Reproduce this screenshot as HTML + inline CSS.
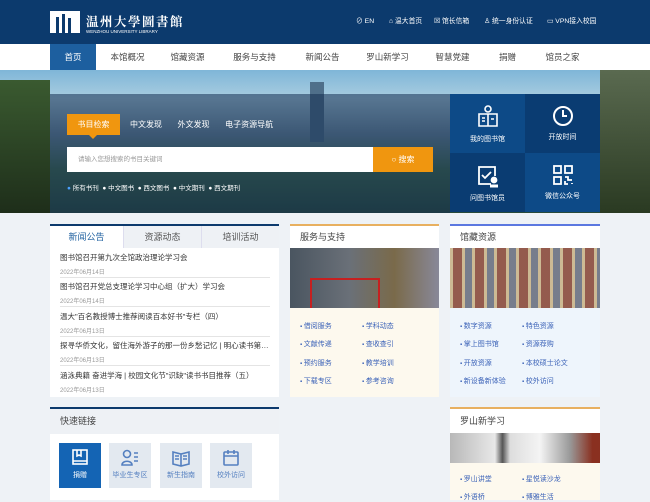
<!DOCTYPE html>
<html><head><meta charset="utf-8"><style>
*{margin:0;padding:0;box-sizing:border-box}
body{width:650px;height:500px;overflow:hidden;background:#eef2f6;font-family:"Liberation Sans","Noto Sans CJK SC",sans-serif;font-size:8px;color:#333;position:relative}
.a{position:absolute}
#hd{left:0;top:0;width:650px;height:44px;background:#0c3a6d}
#nav{left:0;top:44px;width:650px;height:26px;background:#fff}
#nav span{position:absolute;top:0;height:26px;line-height:26px;font-size:8.5px;color:#444;text-align:center}
#ban{left:0;top:70px;width:650px;height:143px;background:linear-gradient(180deg,#7fb6d8 0%,#a9cde0 20%,#6c8aa0 45%,#3f6a4a 70%,#284a3a 100%)}
.tile{position:absolute;width:75px;height:59px;color:#fff;text-align:center;font-size:7px}
.tile svg{display:block;margin:11px auto 5px}
.box{position:absolute;background:#fff}
.hdr{height:22px;line-height:22px;font-size:9px;color:#444;padding-left:10px;background:#fff}
.lk{position:absolute;font-size:7px;color:#3c63b8}
.lk:before{content:"▪ ";font-size:6px}
.ni{position:absolute;left:10px;width:210px;border-bottom:1px solid #e4e4e4;height:29px}
.ni b{display:block;font-weight:normal;font-size:7.5px;color:#333;margin-top:3px;white-space:nowrap;overflow:hidden}
.ni i{display:block;font-style:normal;font-size:6px;color:#999;margin-top:4px}
.q{position:absolute;top:443px;width:42px;height:45px;background:#e3e9f0;color:#5580c0;font-size:7px;text-align:center}
.q svg{display:block;margin:6px auto 3px}
.hl{position:absolute;top:15px;color:#fff;font-size:6.8px;white-space:nowrap}
</style></head><body>
<div id="hd" class="a">
 <div class="a" style="left:50px;top:11px;width:30px;height:22px;background:#fff"></div>
 <div class="a" style="left:56px;top:17px;width:3px;height:16px;background:#0c3a6d"></div>
 <div class="a" style="left:62px;top:14px;width:3px;height:19px;background:#0c3a6d"></div>
 <div class="a" style="left:68px;top:18px;width:3px;height:15px;background:#0c3a6d"></div>
 <div class="a" style="left:86px;top:12px;color:#fff;font-size:12.5px;font-family:'Noto Serif CJK SC',serif;font-weight:bold;letter-spacing:1.5px">温州大學圖書館</div>
 <div class="a" style="left:86px;top:29px;color:#fff;font-size:4.5px">WENZHOU UNIVERSITY LIBRARY</div>
 <div class="hl" style="left:356px">⊘ EN</div>
 <div class="hl" style="left:389px">⌂ 温大首页</div>
 <div class="hl" style="left:434px">☒ 馆长信箱</div>
 <div class="hl" style="left:484px">♙ 统一身份认证</div>
 <div class="hl" style="left:547px">▭ VPN接入校园</div>
</div>
<div id="nav" class="a">
 <span style="left:50px;width:46px;background:#1d5f9f;color:#fff">首页</span>
 <span style="left:100px;width:55px">本馆概况</span>
 <span style="left:160px;width:55px">馆藏资源</span>
 <span style="left:227px;width:55px">服务与支持</span>
 <span style="left:295px;width:55px">新闻公告</span>
 <span style="left:360px;width:55px">罗山新学习</span>
 <span style="left:425px;width:55px">智慧党建</span>
 <span style="left:485px;width:45px">捐赠</span>
 <span style="left:535px;width:55px">馆员之家</span>
</div>
<div id="ban" class="a">
 <div class="a" style="left:0;top:10px;width:50px;height:133px;background:linear-gradient(180deg,#3a5a30,#1e2e1a)"></div>
 <div class="a" style="left:600px;top:0;width:50px;height:143px;background:linear-gradient(180deg,#5a6a50,#2a3a22)"></div>
 <div class="a" style="left:310px;top:12px;width:14px;height:60px;background:#4f6f8a"></div>
</div>
<div class="a" style="left:50px;top:94px;width:400px;height:119px;background:rgba(20,45,80,.55)"></div>
<div class="a" style="left:67px;top:114px;width:53px;height:21px;background:#f0960f;color:#fff;font-size:8px;line-height:21px;text-align:center">书目检索</div>
<div class="a" style="left:89px;top:135px;border:4px solid transparent;border-top-color:#f0960f"></div>
<div class="a" style="left:130px;top:119px;color:#fff;font-size:8px;white-space:nowrap">中文发现 &nbsp;&nbsp;&nbsp;&nbsp;&nbsp; 外文发现 &nbsp;&nbsp;&nbsp;&nbsp;&nbsp; 电子资源导航</div>
<div class="a" style="left:67px;top:147px;width:306px;height:25px;background:#fff;color:#999;font-size:6.5px;line-height:25px;padding-left:11px">请输入您想搜索的书目关键词</div>
<div class="a" style="left:373px;top:147px;width:60px;height:25px;background:#f0960f;color:#fff;font-size:8px;line-height:25px;text-align:center">○ 搜索</div>
<div class="a" style="left:67px;top:182px;color:#fff;font-size:6.5px;white-space:nowrap"><span style="color:#4aa0ff">●</span> 所有书刊 &nbsp;● 中文图书 &nbsp;● 西文图书 &nbsp;● 中文期刊 &nbsp;● 西文期刊</div>
<div class="tile" style="left:450px;top:94px;background:#0d4a87"><svg width="22" height="24" viewBox="0 0 22 24" fill="none" stroke="#fff" stroke-width="1.6"><circle cx="11" cy="4" r="3"/><path d="M2 9h9v12H2zM11 9h9v12h-9zM5 13h3M5 16h3M14 14h3"/></svg>我的图书馆</div>
<div class="tile" style="left:525px;top:94px;background:#0a3c72"><svg width="22" height="22" viewBox="0 0 22 22" fill="none" stroke="#fff" stroke-width="2"><circle cx="11" cy="11" r="9"/><path d="M11 5v6h4"/></svg>开放时间</div>
<div class="tile" style="left:450px;top:153px;background:#0a3c72"><svg width="22" height="24" viewBox="0 0 22 24" fill="none" stroke="#fff" stroke-width="1.8"><path d="M14 20H2V3h16v9"/><path d="M5 11l3 3 6-6"/><circle cx="17" cy="16" r="2.5" fill="#fff"/><path d="M13 22h8" stroke-width="3"/></svg>问图书馆员</div>
<div class="tile" style="left:525px;top:153px;background:#0d4a87"><svg width="22" height="22" viewBox="0 0 22 22" fill="none" stroke="#fff" stroke-width="1.8"><rect x="2" y="2" width="7" height="7"/><rect x="13" y="2" width="7" height="7"/><rect x="2" y="13" width="7" height="7"/><path d="M13 13h3v3h4M13 17v3h3M20 19v1"/></svg>微信公众号</div>

<div class="box" style="left:50px;top:224px;width:229px;height:173px;border-top:2px solid #0c3a6d">
 <div class="a" style="left:0;top:0;width:229px;height:22px;background:#eef1f5"></div>
 <div class="a" style="left:0;top:0;width:73px;height:22px;background:#fff;color:#1d5f9f;font-size:9px;line-height:22px;text-align:center">新闻公告</div>
 <div class="a" style="left:73px;top:0;width:78px;height:22px;color:#555;font-size:9px;line-height:22px;text-align:center;border-left:1px solid #dde">资源动态</div>
 <div class="a" style="left:151px;top:0;width:78px;height:22px;color:#555;font-size:9px;line-height:22px;text-align:center;border-left:1px solid #dde">培训活动</div>
 <div class="ni" style="top:23px"><b>图书馆召开第九次全馆政治理论学习会</b><i>2022年06月14日</i></div>
 <div class="ni" style="top:52px"><b>图书馆召开党总支理论学习中心组（扩大）学习会</b><i>2022年06月14日</i></div>
 <div class="ni" style="top:82px"><b>温大"百名教授博士推荐阅读百本好书"专栏（四）</b><i>2022年06月13日</i></div>
 <div class="ni" style="top:111px"><b>探寻华侨文化，留住海外游子的那一份乡愁记忆 | 明心读书第…</b><i>2022年06月13日</i></div>
 <div class="ni" style="top:141px;border:none"><b>涵泳典籍 奋进学海 | 校园文化节"识缺"读书书目推荐（五）</b><i>2022年06月13日</i></div>
</div>
<div class="box" style="left:290px;top:224px;width:149px;height:173px;border-top:2px solid #e8b060;background:#fdf9ee">
 <div class="hdr">服务与支持</div>
 <div class="a" style="left:0;top:22px;width:149px;height:60px;background:linear-gradient(90deg,#4a5560,#6a7078 40%,#7a6a4a 70%,#889)"></div>
 <div class="a" style="left:20px;top:52px;width:70px;height:30px;border:2px solid #c62020;border-bottom:none"></div>
 <div class="lk" style="left:10px;top:95px">借阅服务</div><div class="lk" style="left:72px;top:95px">学科动态</div>
 <div class="lk" style="left:10px;top:113px">文献传递</div><div class="lk" style="left:72px;top:113px">查收查引</div>
 <div class="lk" style="left:10px;top:132px">预约服务</div><div class="lk" style="left:72px;top:132px">教学培训</div>
 <div class="lk" style="left:10px;top:150px">下载专区</div><div class="lk" style="left:72px;top:150px">参考咨询</div>
</div>
<div class="box" style="left:450px;top:224px;width:150px;height:173px;border-top:2px solid #5b78e0;background:#eef5fc">
 <div class="hdr">馆藏资源</div>
 <div class="a" style="left:0;top:22px;width:150px;height:60px;background:repeating-linear-gradient(90deg,#c9b488 0 3px,#8a4a3a 3px 12px,#c9b488 12px 15px,#6a7080 15px 22px);opacity:.9"></div>
 <div class="lk" style="left:10px;top:95px">数字资源</div><div class="lk" style="left:72px;top:95px">特色资源</div>
 <div class="lk" style="left:10px;top:113px">掌上图书馆</div><div class="lk" style="left:72px;top:113px">资源荐购</div>
 <div class="lk" style="left:10px;top:132px">开放资源</div><div class="lk" style="left:72px;top:132px">本校硕士论文</div>
 <div class="lk" style="left:10px;top:150px">新设备新体验</div><div class="lk" style="left:72px;top:150px">校外访问</div>
</div>
<div class="box" style="left:50px;top:407px;width:229px;height:93px;border-top:2px solid #0c3a6d">
 <div class="hdr" style="background:#eef1f5;height:25px;line-height:25px">快速链接</div>
</div>
<div class="q" style="left:59px;background:#1464b4;color:#fff"><svg width="18" height="18" viewBox="0 0 18 18" fill="none" stroke="#fff" stroke-width="1.6"><rect x="2" y="1" width="14" height="14"/><path d="M2 12h14M6 1v6l2-1 2 1V1"/></svg>捐赠</div>
<div class="q" style="left:109px"><svg width="18" height="18" viewBox="0 0 18 18" fill="none" stroke="#5580c0" stroke-width="1.6"><circle cx="6" cy="5" r="3.5"/><path d="M1 16c0-5 10-5 10 0zM13 4h4M13 8h4M13 12h4"/></svg>毕业生专区</div>
<div class="q" style="left:160px"><svg width="18" height="18" viewBox="0 0 18 18" fill="none" stroke="#5580c0" stroke-width="1.6"><path d="M1 3l8 2 8-2v12l-8 2-8-2zM9 5v12M3 7h4M3 10h4M11 7h4M11 10h4"/></svg>新生指南</div>
<div class="q" style="left:210px"><svg width="18" height="18" viewBox="0 0 18 18" fill="none" stroke="#5580c0" stroke-width="1.6"><rect x="2" y="3" width="14" height="13" rx="1"/><path d="M2 7h14M6 1v4M12 1v4"/></svg>校外访问</div>
<div class="box" style="left:450px;top:407px;width:150px;height:93px;border-top:2px solid #e8b060;background:#fdf9ee">
 <div class="hdr" style="height:24px;line-height:24px">罗山新学习</div>
 <div class="a" style="left:0;top:24px;width:150px;height:30px;background:linear-gradient(90deg,#b8b8b8,#e8e8e8 30%,#555 35%,#ddd 40%,#f4f4f4 60%,#999 80%,#8a3020 95%)"></div>
 <div class="lk" style="left:10px;top:65px">罗山讲堂</div><div class="lk" style="left:72px;top:65px">星悦读沙龙</div>
 <div class="lk" style="left:10px;top:83px">外语桥</div><div class="lk" style="left:72px;top:83px">博雅生活</div>
</div>
</body></html>
